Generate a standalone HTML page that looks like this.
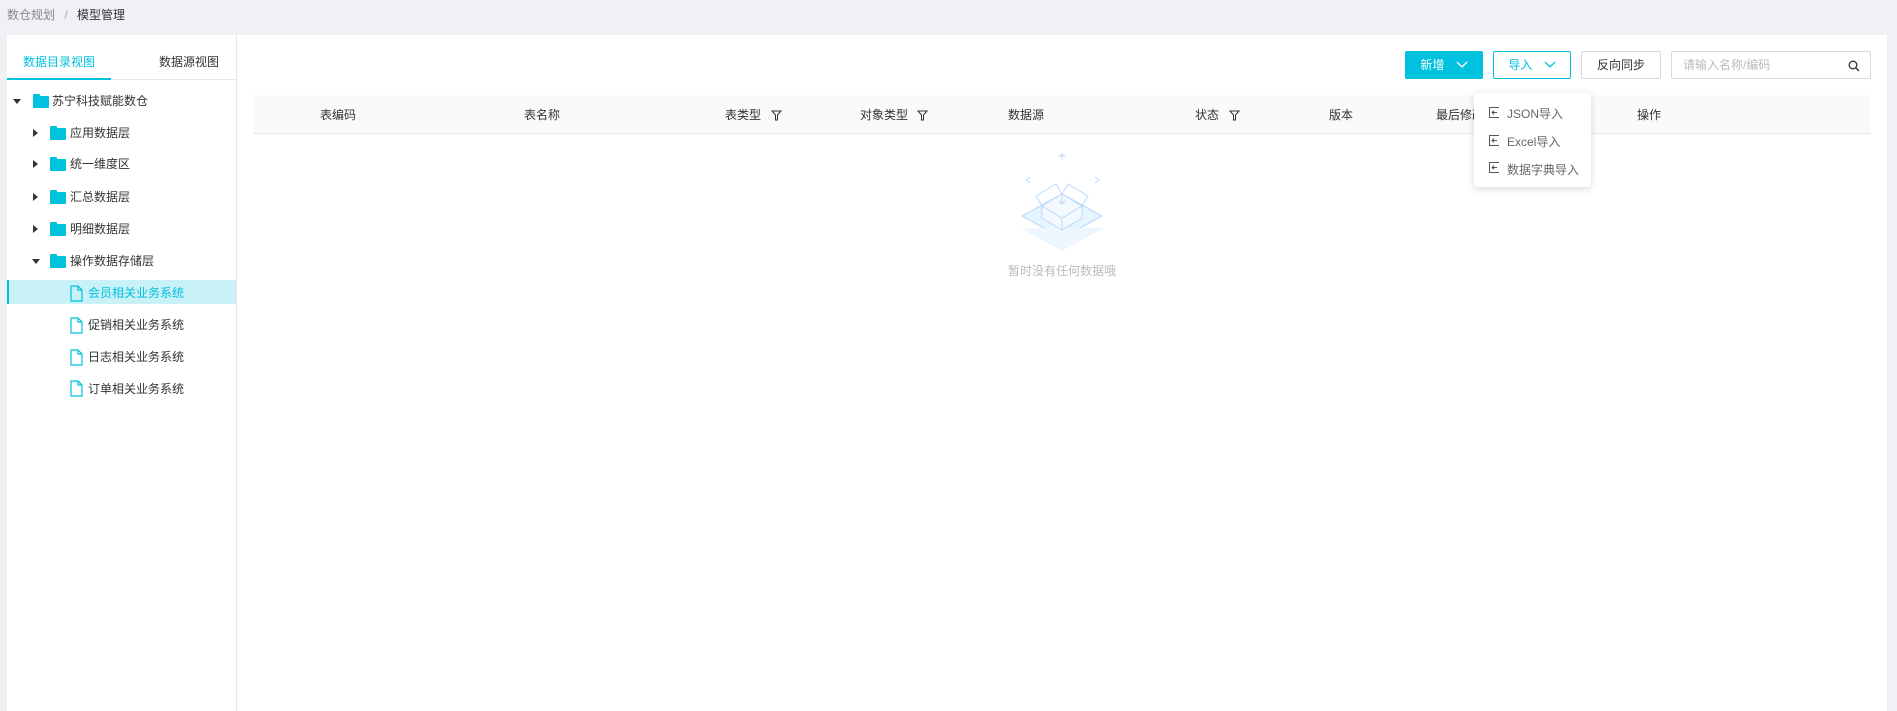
<!DOCTYPE html>
<html><head><meta charset="utf-8"><style>
*{margin:0;padding:0;box-sizing:border-box}
body{width:1897px;height:711px;background:#f0f1f5;font-family:"Liberation Sans","Noto Sans CJK SC",sans-serif;font-size:12px;color:#333;position:relative;overflow:hidden}
.a{position:absolute;white-space:nowrap}
.card{position:absolute;left:7px;top:35px;width:1880px;height:676px;background:#fff}
.vline{position:absolute;left:236px;top:35px;width:1px;height:676px;background:#e8e8e8}
.row{position:absolute;left:7px;width:229px;height:24px;line-height:24px;font-size:12px}
.fold{position:absolute;width:16px;height:12px;background:#00c1de;border-radius:1px}
.fold:before{content:"";position:absolute;left:0;top:-2px;width:7px;height:3px;background:#00c1de;border-radius:1px 1px 0 0}
.car{position:absolute;width:0;height:0}
.cr{border-top:4px solid transparent;border-bottom:4px solid transparent;border-left:5px solid #333}
.cd{border-left:4px solid transparent;border-right:4px solid transparent;border-top:5px solid #333}
.btn{position:absolute;top:51px;height:28px;line-height:26px;text-align:center;border:1px solid #d9d9d9;border-radius:2px;font-size:12px;background:#fff}
.th{position:absolute;top:106px;font-size:12px;color:#333}
.dd{position:absolute;left:1474px;top:93px;width:117px;height:94px;background:#fff;border-radius:3px;box-shadow:0 2px 8px rgba(0,0,0,.15)}
.di{position:absolute;left:14px;font-size:12px;color:#666}
</style></head><body>
<div class="a" style="left:7px;top:6px;font-size:12px;color:#888">数仓规划 <span style="margin:0 6px;color:#aaa">/</span> <span style="color:#333">模型管理</span></div>
<div class="card"></div>
<div class="vline"></div>
<div class="a" style="left:7px;top:79px;width:229px;height:1px;background:#e8e8e8"></div>
<div class="a" style="left:7px;top:78px;width:104px;height:2px;background:#00c1de"></div>
<div class="a" style="left:23px;top:53px;color:#00c1de;font-size:12px">数据目录视图</div>
<div class="a" style="left:159px;top:53px;color:#333;font-size:12px">数据源视图</div>

<div class="row" style="top:89px"><div class="car cd" style="left:6px;top:10px"></div><div class="fold" style="left:26px;top:7px"></div><span class="a" style="left:45px">苏宁科技赋能数仓</span></div>
<div class="row" style="top:121px"><div class="car cr" style="left:26px;top:8px"></div><div class="fold" style="left:43px;top:7px"></div><span class="a" style="left:63px">应用数据层</span></div>
<div class="row" style="top:152px"><div class="car cr" style="left:26px;top:8px"></div><div class="fold" style="left:43px;top:7px"></div><span class="a" style="left:63px">统一维度区</span></div>
<div class="row" style="top:185px"><div class="car cr" style="left:26px;top:8px"></div><div class="fold" style="left:43px;top:7px"></div><span class="a" style="left:63px">汇总数据层</span></div>
<div class="row" style="top:217px"><div class="car cr" style="left:26px;top:8px"></div><div class="fold" style="left:43px;top:7px"></div><span class="a" style="left:63px">明细数据层</span></div>
<div class="row" style="top:249px"><div class="car cd" style="left:25px;top:10px"></div><div class="fold" style="left:43px;top:7px"></div><span class="a" style="left:63px">操作数据存储层</span></div>
<div class="row" style="top:280px;background:#c9f1f8;border-left:2px solid #00c1de"></div>
<svg class="a" style="left:0;top:0" width="100" height="400"><g fill="none" stroke="#00c1de" stroke-width="1.2">
<path d="M71 286h7l4 4v11h-11z M78 286v4h4"/><path d="M71 318h7l4 4v11h-11z M78 318v4h4"/><path d="M71 350h7l4 4v11h-11z M78 350v4h4"/><path d="M71 381h7l4 4v11h-11z M78 381v4h4"/></g></svg>
<div class="a" style="left:88px;top:284px;color:#00c1de">会员相关业务系统</div>
<div class="a" style="left:88px;top:316px">促销相关业务系统</div>
<div class="a" style="left:88px;top:348px">日志相关业务系统</div>
<div class="a" style="left:88px;top:380px">订单相关业务系统</div>

<div class="btn" style="left:1405px;width:78px;background:#00c1de;border-color:#00c1de;color:#fff">新增 <svg width="12" height="8" style="margin-left:8px"><path d="M1 1l5 5 5-5" fill="none" stroke="#fff" stroke-width="1.3"/></svg></div>
<div class="btn" style="left:1493px;width:78px;border-color:#00c1de;color:#00c1de">导入 <svg width="12" height="8" style="margin-left:8px"><path d="M1 1l5 5 5-5" fill="none" stroke="#00c1de" stroke-width="1.3"/></svg></div>
<div class="btn" style="left:1581px;width:80px">反向同步</div>
<div class="btn" style="left:1671px;width:200px;text-align:left;padding-left:11px;color:#bbb">请输入名称/编码
<svg class="a" style="right:10px;top:8px" width="12" height="12"><circle cx="5" cy="5" r="3.8" fill="none" stroke="#333" stroke-width="1.3"/><path d="M8 8l3 3" stroke="#333" stroke-width="1.4"/></svg></div>

<div class="a" style="left:253px;top:95px;width:1618px;height:39px;background:#fafafa;border-bottom:1px solid #e8e8e8"></div>
<div class="th" style="left:320px">表编码</div>
<div class="th" style="left:524px">表名称</div>
<div class="th" style="left:725px">表类型</div>
<div class="th" style="left:860px">对象类型</div>
<div class="th" style="left:1008px">数据源</div>
<div class="th" style="left:1195px">状态</div>
<div class="th" style="left:1329px">版本</div>
<div class="th" style="left:1436px">最后修改时间</div>
<div class="th" style="left:1637px">操作</div>
<svg class="a" style="left:0;top:0" width="1300" height="130"><g fill="none" stroke="#333" stroke-width="1"><path d="M772 111h9l-3.5 4v5h-2v-5z"/><path d="M918 111h9l-3.5 4v5h-2v-5z"/><path d="M1230 111h9l-3.5 4v5h-2v-5z"/></g></svg>

<div class="dd">
<svg class="a" style="left:14px;top:13px" width="12" height="70"><g fill="none" stroke="#555" stroke-width="1"><path d="M11 1.5H1.5v10H11M4 6.5h5M6 4.5l-2 2 2 2"/><path d="M11 29.5H1.5v10H11M4 34.5h5M6 32.5l-2 2 2 2"/><path d="M11 56.5H1.5v10H11M4 61.5h5M6 59.5l-2 2 2 2"/></g></svg>
<div class="di" style="left:33px;top:12px">JSON导入</div>
<div class="di" style="left:33px;top:40px">Excel导入</div>
<div class="di" style="left:33px;top:68px">数据字典导入</div>
</div>

<svg class="a" style="left:1020px;top:148px" width="85" height="105"><g stroke="#b9d9fb" stroke-width="1" fill="none">
<path d="M42 6l-3 3M42 6l3 3M42 6v6" /><path d="M6 32l4-3M6 32l4 3M79 32l-4-3M79 32l-4 3"/>
<path d="M2 68l40 22 40-22-40-22z" fill="#e6f4ff"/>
<path d="M2 80l40 22 40-22" stroke="#e6f4ff" fill="#eef7ff"/>
<path d="M22 58v12l20 12 20-12V58" fill="#f3f9ff"/>
<path d="M22 58l20-12 20 12-20 12z" fill="#f3f9ff"/>
<path d="M22 58l-6-10 20-12 6 10M62 58l6-10-20-12-6 10M42 70v12"/>
<path d="M42 46v10M39 53l3 3 3-3"/>
</g></svg>
<div class="a" style="left:1008px;top:262px;color:#bbb;font-size:12px">暂时没有任何数据哦</div>
</body></html>
